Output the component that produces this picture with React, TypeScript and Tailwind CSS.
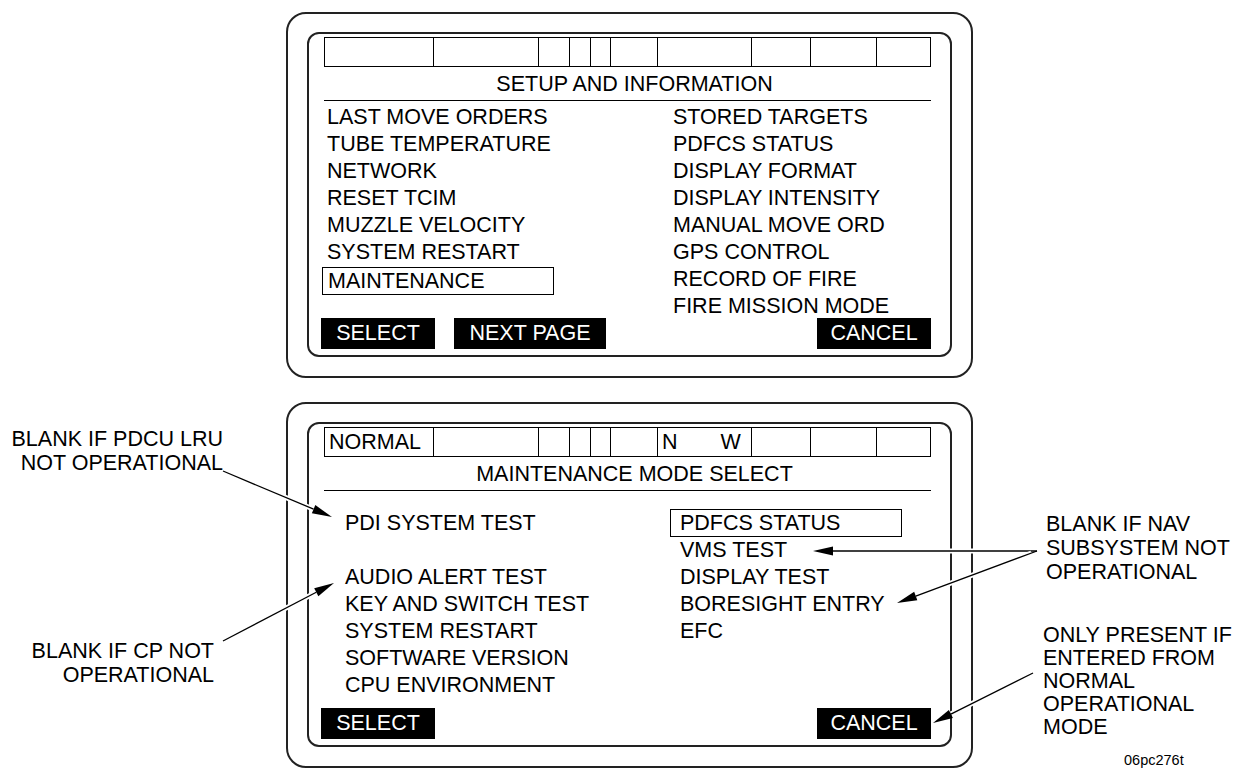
import React from 'react';

// status strip cell widths, left to right
const cells = ['w-[109px]', 'w-[105px]', 'w-[31px]', 'w-[21px]', 'w-[20px]', 'w-[47px]', 'w-[94px]', 'w-[59px]', 'w-[66px]', 'w-[53px]'];

const arrows: [number, number, number, number][] = [
    [223, 471, 332, 517],
    [223, 641, 334, 583],
    [1037, 551, 813, 551],
    [1037, 551, 897, 603],
    [1033, 673, 933, 723],
];

const StatusBar: React.FC<{ normal?: boolean }> = ({ normal }) => (
    <div className="ml-[15px] mt-[3px] flex h-[30px] w-[607px] border border-black">
        {cells.map((w, i) => (
            <div
                key={i}
                className={`${w} flex h-full shrink-0 items-center leading-[28px] ${i < cells.length - 1 ? 'border-r border-black' : ''}`}
            >
                {normal && i === 0 && <span className="pl-[4px]">NORMAL</span>}
                {normal && i === 6 && (
                    <>
                        <span className="pl-[4px]">N</span>
                        <span className="ml-[43px]">W</span>
                    </>
                )}
            </div>
        ))}
    </div>
);

const Title: React.FC<{ children: React.ReactNode }> = ({ children }) => (
    <div className="ml-[15px] h-[34px] w-[607px] border-b border-black pl-[14px] text-center leading-[34px] whitespace-nowrap">
        {children}
    </div>
);

const Panel: React.FC<{ children: React.ReactNode }> = ({ children }) => (
    <div className="h-[366px] w-[687px] rounded-[20px] border-2 border-[#222] pl-[19px] pt-[18px]">
        <div className="flex h-[325px] w-[645px] flex-col rounded-[12px] border-2 border-[#222]">{children}</div>
    </div>
);

const Row: React.FC<{ children?: React.ReactNode; className?: string }> = ({ children, className = '' }) => (
    <div className={`h-[27px] leading-[27px] whitespace-nowrap ${className}`}>{children}</div>
);

const Btn: React.FC<{ children: React.ReactNode; className?: string }> = ({ children, className = '' }) => (
    <div className={`h-[31px] bg-black text-center leading-[31px] text-white whitespace-nowrap ${className}`}>{children}</div>
);

function headPoints(x1: number, y1: number, x2: number, y2: number) {
    const dx = x2 - x1;
    const dy = y2 - y1;
    const len = Math.hypot(dx, dy);
    const ux = dx / len;
    const uy = dy / len;
    const bx = x2 - ux * 20;
    const by = y2 - uy * 20;
    return {
        bx,
        by,
        pts: `${x2},${y2} ${bx - uy * 4.5},${by + ux * 4.5} ${bx + uy * 4.5},${by - ux * 4.5}`,
        sx: x1 + ux * 6,
        sy: y1 + uy * 6,
    };
}

const App: React.FC = () => {
    return (
        <div className="relative h-[771px] w-[1244px] overflow-hidden bg-white font-['Liberation_Sans',Arial,sans-serif] text-[21.5px] text-black">
            <div className="flex flex-col gap-[24px] pl-[286px] pt-[12px]">
                {/* setup and information page */}
                <Panel>
                    <StatusBar />
                    <Title>SETUP AND INFORMATION</Title>
                    <div className="ml-[15px] flex h-[219px] w-[607px] pt-[3px]">
                        <div className="flex w-[349px] flex-col pl-[3px]">
                            <Row>LAST MOVE ORDERS</Row>
                            <Row>TUBE TEMPERATURE</Row>
                            <Row>NETWORK</Row>
                            <Row>RESET TCIM</Row>
                            <Row>MUZZLE VELOCITY</Row>
                            <Row>SYSTEM RESTART</Row>
                            <div className="-ml-[5px] mt-[1px] h-[28px] w-[232px] border border-black pl-[5px] leading-[26px]">
                                MAINTENANCE
                            </div>
                        </div>
                        <div className="flex flex-col">
                            <Row>STORED TARGETS</Row>
                            <Row>PDFCS STATUS</Row>
                            <Row>DISPLAY FORMAT</Row>
                            <Row>DISPLAY INTENSITY</Row>
                            <Row>MANUAL MOVE ORD</Row>
                            <Row>GPS CONTROL</Row>
                            <Row>RECORD OF FIRE</Row>
                            <Row>FIRE MISSION MODE</Row>
                        </div>
                    </div>
                    <div className="-mt-[2px] ml-[12px] flex w-[610px]">
                        <Btn className="w-[114px]">SELECT</Btn>
                        <Btn className="ml-[19px] w-[152px]">NEXT PAGE</Btn>
                        <Btn className="ml-auto w-[114px]">CANCEL</Btn>
                    </div>
                </Panel>

                {/* maintenance mode select page */}
                <Panel>
                    <StatusBar normal />
                    <Title>MAINTENANCE MODE SELECT</Title>
                    <div className="ml-[15px] flex h-[208px] w-[607px] pt-[19px]">
                        <div className="flex w-[346px] flex-col pl-[21px]">
                            <Row>PDI SYSTEM TEST</Row>
                            <Row />
                            <Row>AUDIO ALERT TEST</Row>
                            <Row>KEY AND SWITCH TEST</Row>
                            <Row>SYSTEM RESTART</Row>
                            <Row>SOFTWARE VERSION</Row>
                            <Row>CPU ENVIRONMENT</Row>
                        </div>
                        <div className="flex flex-col">
                            <div className="-mt-[1px] h-[28px] w-[232px] border border-black pl-[9px] leading-[26px] whitespace-nowrap">
                                PDFCS STATUS
                            </div>
                            <Row className="pl-[10px]">VMS TEST</Row>
                            <Row className="pl-[10px]">DISPLAY TEST</Row>
                            <Row className="pl-[10px]">BORESIGHT ENTRY</Row>
                            <Row className="pl-[10px]">EFC</Row>
                        </div>
                    </div>
                    <div className="ml-[12px] mt-[9px] flex w-[610px]">
                        <Btn className="w-[114px]">SELECT</Btn>
                        <Btn className="ml-auto w-[114px]">CANCEL</Btn>
                    </div>
                </Panel>
            </div>

            {/* callouts */}
            <div className="absolute left-0 top-[427px] w-[223px] text-right leading-[24px] whitespace-nowrap">
                BLANK IF PDCU LRU
                <br />
                NOT OPERATIONAL
            </div>
            <div className="absolute left-0 top-[640px] w-[214px] text-right leading-[23.5px] whitespace-nowrap">
                BLANK IF CP NOT
                <br />
                OPERATIONAL
            </div>
            <div className="absolute left-[1046px] top-[512px] leading-[24px] whitespace-nowrap">
                BLANK IF NAV
                <br />
                SUBSYSTEM NOT
                <br />
                OPERATIONAL
            </div>
            <div className="absolute left-[1043px] top-[624px] leading-[23px] whitespace-nowrap">
                ONLY PRESENT IF
                <br />
                ENTERED FROM
                <br />
                NORMAL
                <br />
                OPERATIONAL
                <br />
                MODE
            </div>
            <div className="absolute left-[1124px] top-[751px] text-[14.5px] leading-[18px]">06pc276t</div>

            <svg className="pointer-events-none absolute left-0 top-0" width="1244" height="771" viewBox="0 0 1244 771">
                {arrows.map(([x1, y1, x2, y2], i) => {
                    const h = headPoints(x1, y1, x2, y2);
                    return (
                        <g key={i}>
                            <line x1={h.sx} y1={h.sy} x2={h.bx} y2={h.by} stroke="#fff" strokeWidth="5" />
                            <line x1={x1} y1={y1} x2={h.bx} y2={h.by} stroke="#000" strokeWidth="1.3" />
                            <polygon points={h.pts} fill="#000" />
                        </g>
                    );
                })}
            </svg>
        </div>
    );
};

export default App;
